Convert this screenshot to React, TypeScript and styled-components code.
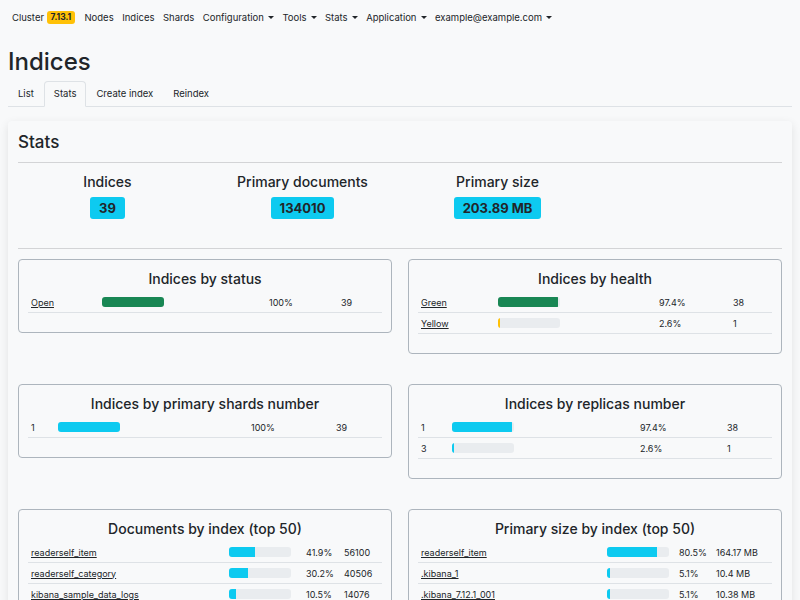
import React from "react";
import styled, { createGlobalStyle } from "styled-components";

const GlobalStyle = createGlobalStyle`
  * { box-sizing: border-box; }
  body {
    margin: 0;
    background: #f8f9fa;
    color: #212529;
    font-family: Inter, "Noto Sans", "Liberation Sans", sans-serif;
  }
`;

const Navbar = styled.nav`
  display: flex;
  align-items: center;
  height: 34px;
  padding: 0 12px;
  font-size: 9.5px;
  color: #212529;
`;

const Brand = styled.span`
  display: flex;
  align-items: center;
  gap: 3px;
  margin-right: 5.5px;
`;

const VersionBadge = styled.span`
  background: #ffc107;
  color: #212529;
  font-weight: 700;
  font-size: 8.5px;
  line-height: 13px;
  padding: 0 3.5px;
  border-radius: 3px;
`;

const NavLink = styled.span<{ $dropdown?: boolean }>`
  padding: 0 4.25px;
  white-space: nowrap;
  ${(p) =>
    p.$dropdown &&
    `
    &::after {
      content: "";
      display: inline-block;
      margin-left: 4px;
      vertical-align: 2px;
      border-top: 3px solid #212529;
      border-left: 3px solid transparent;
      border-right: 3px solid transparent;
    }
  `}
`;

const Main = styled.main`
  padding: 0 8px;
`;

const PageTitle = styled.h1`
  margin: 13px 0 4px;
  font-size: 24px;
  font-weight: 500;
  line-height: 30px;
`;

const Tabs = styled.ul`
  display: flex;
  margin: 0;
  padding: 0;
  list-style: none;
  border-bottom: 1px solid #dee2e6;
`;

const Tab = styled.li<{ $active?: boolean }>`
  margin-bottom: -1px;
  padding: 6px 9px;
  font-size: 9.5px;
  line-height: 12px;
  border: 1px solid ${(p) => (p.$active ? "#dee2e6" : "transparent")};
  border-bottom-color: ${(p) => (p.$active ? "#f8f9fa" : "transparent")};
  border-radius: 4px 4px 0 0;
  background: ${(p) => (p.$active ? "#f8f9fa" : "transparent")};
  color: #212529;
`;

const Card = styled.section`
  margin-top: 14px;
  padding: 11px 10px 20px;
  background: #f8f9fa;
  border-radius: 4px;
  box-shadow: 0 3px 10px rgba(0, 0, 0, 0.1);
`;

const CardTitle = styled.h2`
  margin: 0 0 10px;
  font-size: 17px;
  font-weight: 500;
  line-height: 20px;
`;

const Divider = styled.hr`
  margin: 0 0 10px;
  border: 0;
  border-top: 1px solid #d3d4d6;
`;

const StatsRow = styled.div`
  display: grid;
  grid-template-columns: repeat(4, 1fr);
  margin: 0 -8px 29px;
`;

const StatBlock = styled.div`
  display: flex;
  flex-direction: column;
  align-items: center;
  gap: 6px;
`;

const StatLabel = styled.div`
  font-size: 14px;
  font-weight: 500;
  line-height: 18px;
`;

const StatBadge = styled.span`
  background: #0dcaf0;
  color: #212529;
  font-weight: 700;
  font-size: 13px;
  line-height: 22px;
  padding: 0 9px;
  border-radius: 3px;
`;

const PanelGrid = styled.div`
  display: grid;
  grid-template-columns: 1fr 1fr;
  column-gap: 16px;
  row-gap: 30px;
  align-items: start;
`;

const Panel = styled.div`
  border: 1px solid #adb5bd;
  border-radius: 4px;
  padding: 10px 9px 19px;
`;

const PanelTitle = styled.h3`
  margin: 0 0 4px;
  text-align: center;
  font-size: 14px;
  font-weight: 500;
  line-height: 18px;
`;

const Row = styled.div<{ $cols: string }>`
  display: grid;
  grid-template-columns: ${(p) => p.$cols};
  align-items: center;
  height: 21px;
  border-bottom: 1px solid #dee2e6;
  font-size: 9px;
`;

const Cell = styled.div`
  padding: 0 3px;
  white-space: nowrap;
  overflow: hidden;
`;

const NameLink = styled.a`
  color: #212529;
  text-decoration: underline;
`;

const Bar = styled.div`
  width: 62px;
  height: 10px;
  background: #e9ecef;
  border-radius: 3px;
  overflow: hidden;
`;

const BarFill = styled.div<{ $color: string }>`
  height: 100%;
  background: ${(p) => p.$color};
`;

type Item = { name: string; pct: number; label: string; count: string; link?: boolean; color: string };
type PanelData = { title: string; cols: string; items: Item[] };

const GREEN = "#198754";
const CYAN = "#0dcaf0";
const YELLOW = "#ffc107";

const panels: PanelData[] = [
  {
    title: "Indices by status",
    cols: "71px 167px 72px 1fr",
    items: [{ name: "Open", pct: 100, label: "100%", count: "39", link: true, color: GREEN }],
  },
  {
    title: "Indices by health",
    cols: "77px 161px 74px 1fr",
    items: [
      { name: "Green", pct: 97.4, label: "97.4%", count: "38", link: true, color: GREEN },
      { name: "Yellow", pct: 2.6, label: "2.6%", count: "1", link: true, color: YELLOW },
    ],
  },
  {
    title: "Indices by primary shards number",
    cols: "27px 193px 85px 1fr",
    items: [{ name: "1", pct: 100, label: "100%", count: "39", color: CYAN }],
  },
  {
    title: "Indices by replicas number",
    cols: "31px 188px 87px 1fr",
    items: [
      { name: "1", pct: 97.4, label: "97.4%", count: "38", color: CYAN },
      { name: "3", pct: 2.6, label: "2.6%", count: "1", color: CYAN },
    ],
  },
  {
    title: "Documents by index (top 50)",
    cols: "198px 77px 38px 1fr",
    items: [
      { name: "readerself_item", pct: 41.9, label: "41.9%", count: "56100", link: true, color: CYAN },
      { name: "readerself_category", pct: 30.2, label: "30.2%", count: "40506", link: true, color: CYAN },
      { name: "kibana_sample_data_logs", pct: 10.5, label: "10.5%", count: "14076", link: true, color: CYAN },
    ],
  },
  {
    title: "Primary size by index (top 50)",
    cols: "186px 72px 37px 1fr",
    items: [
      { name: "readerself_item", pct: 80.5, label: "80.5%", count: "164.17 MB", link: true, color: CYAN },
      { name: ".kibana_1", pct: 5.1, label: "5.1%", count: "10.4 MB", link: true, color: CYAN },
      { name: ".kibana_7.12.1_001", pct: 5.1, label: "5.1%", count: "10.38 MB", link: true, color: CYAN },
    ],
  },
];

const stats = [
  { label: "Indices", value: "39" },
  { label: "Primary documents", value: "134010" },
  { label: "Primary size", value: "203.89 MB" },
];

export default function App() {
  return (
    <>
      <GlobalStyle />
      <Navbar>
        <Brand>
          Cluster <VersionBadge>7.13.1</VersionBadge>
        </Brand>
        <NavLink>Nodes</NavLink>
        <NavLink>Indices</NavLink>
        <NavLink>Shards</NavLink>
        <NavLink $dropdown>Configuration</NavLink>
        <NavLink $dropdown>Tools</NavLink>
        <NavLink $dropdown>Stats</NavLink>
        <NavLink $dropdown>Application</NavLink>
        <NavLink $dropdown>example@example.com</NavLink>
      </Navbar>
      <Main>
        <PageTitle>Indices</PageTitle>
        <Tabs>
          <Tab>List</Tab>
          <Tab $active>Stats</Tab>
          <Tab>Create index</Tab>
          <Tab>Reindex</Tab>
        </Tabs>
        <Card>
          <CardTitle>Stats</CardTitle>
          <Divider />
          <StatsRow>
            {stats.map((s) => (
              <StatBlock key={s.label}>
                <StatLabel>{s.label}</StatLabel>
                <StatBadge>{s.value}</StatBadge>
              </StatBlock>
            ))}
          </StatsRow>
          <Divider />
          <PanelGrid>
            {panels.map((p) => (
              <Panel key={p.title}>
                <PanelTitle>{p.title}</PanelTitle>
                {p.items.map((it) => (
                  <Row key={it.name} $cols={p.cols}>
                    <Cell>{it.link ? <NameLink href="#">{it.name}</NameLink> : it.name}</Cell>
                    <Cell>
                      <Bar>
                        <BarFill $color={it.color} style={{ width: `${it.pct}%` }} />
                      </Bar>
                    </Cell>
                    <Cell>{it.label}</Cell>
                    <Cell>{it.count}</Cell>
                  </Row>
                ))}
              </Panel>
            ))}
          </PanelGrid>
        </Card>
      </Main>
    </>
  );
}
